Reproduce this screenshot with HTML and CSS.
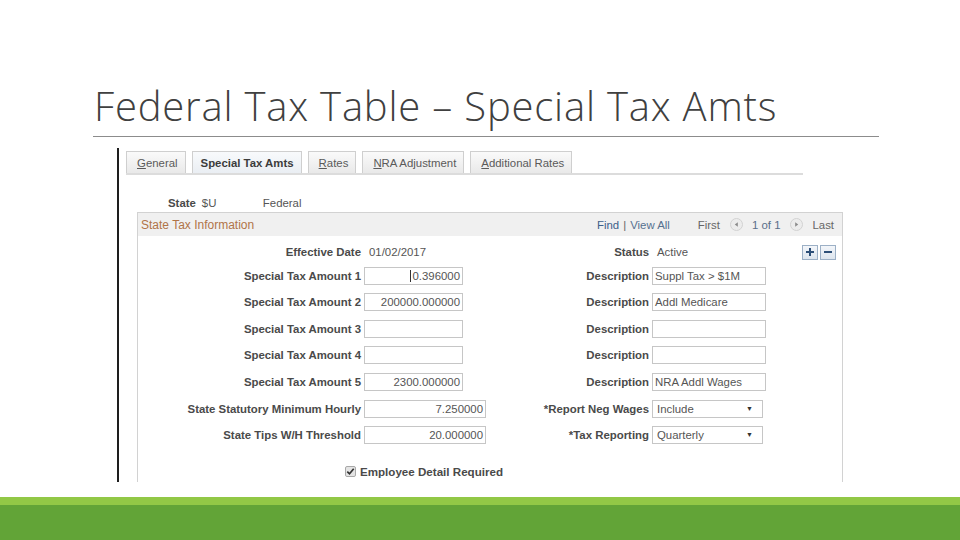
FILE: index.html
```html
<!DOCTYPE html>
<html>
<head>
<meta charset="utf-8">
<link rel="stylesheet" href="styles.css">
</head>
<body>
<div class="slide">
  <header class="title">
    <h1>Federal Tax Table – Special Tax Amts</h1>
  </header>
  <main class="shot">
    <nav class="tabs">
      <span class="tab"><u>G</u>eneral</span>
      <span class="tab active">Special Tax Amts</span>
      <span class="tab"><u>R</u>ates</span>
      <span class="tab"><u>N</u>RA Adjustment</span>
      <span class="tab"><u>A</u>dditional Rates</span>
    </nav>
    <div class="state-row">
      <span class="lbl">State</span>
      <span class="val code">$U</span>
      <span class="val">Federal</span>
    </div>
    <section class="panel">
      <div class="panel-head">
        <span class="panel-title">State Tax Information</span>
        <span class="pager">
          <span class="find">Find</span><span class="sep">|</span><span class="viewall">View All</span>
          <span class="first">First</span>
          <span class="circ"><svg width="13" height="13" viewBox="0 0 13 13"><circle cx="6.5" cy="6.5" r="6" fill="#ececec" stroke="#d2d2d2"/><path d="M7.8 4.2 L4.8 6.5 L7.8 8.8 Z" fill="#8a8a8a"/></svg></span>
          <span class="count">1 of 1</span>
          <span class="circ"><svg width="13" height="13" viewBox="0 0 13 13"><circle cx="6.5" cy="6.5" r="6" fill="#ececec" stroke="#d2d2d2"/><path d="M5.2 4.2 L8.2 6.5 L5.2 8.8 Z" fill="#8a8a8a"/></svg></span>
          <span class="last">Last</span>
        </span>
      </div>
      <div class="grid">
        <span class="lbl">Effective Date</span>
        <span class="val date">01/02/2017</span>
        <span class="lbl">Status</span>
        <span class="status-cell"><span class="val active-val">Active</span>
          <span class="btns">
            <span class="sqbtn"><svg width="10" height="10" viewBox="0 0 10 10"><path d="M5 1 V9 M1 5 H9" stroke="#2d4f78" stroke-width="2"/></svg></span>
            <span class="sqbtn"><svg width="10" height="10" viewBox="0 0 10 10"><path d="M1 5 H9" stroke="#2d4f78" stroke-width="2"/></svg></span>
          </span>
        </span>

        <span class="lbl">Special Tax Amount 1</span>
        <span class="field num short"><span class="caret"></span>0.396000</span>
        <span class="lbl">Description</span>
        <span class="field desc">Suppl Tax &gt; $1M</span>

        <span class="lbl">Special Tax Amount 2</span>
        <span class="field num short">200000.000000</span>
        <span class="lbl">Description</span>
        <span class="field desc">Addl Medicare</span>

        <span class="lbl">Special Tax Amount 3</span>
        <span class="field num short"></span>
        <span class="lbl">Description</span>
        <span class="field desc"></span>

        <span class="lbl">Special Tax Amount 4</span>
        <span class="field num short"></span>
        <span class="lbl">Description</span>
        <span class="field desc"></span>

        <span class="lbl">Special Tax Amount 5</span>
        <span class="field num short">2300.000000</span>
        <span class="lbl">Description</span>
        <span class="field desc">NRA Addl Wages</span>

        <span class="lbl">State Statutory Minimum Hourly</span>
        <span class="field num long">7.250000</span>
        <span class="lbl">*Report Neg Wages</span>
        <span class="field select">Include<span class="arrow">▼</span></span>

        <span class="lbl">State Tips W/H Threshold</span>
        <span class="field num long">20.000000</span>
        <span class="lbl">*Tax Reporting</span>
        <span class="field select">Quarterly<span class="arrow">▼</span></span>
      </div>
      <div class="check-row">
        <svg class="chk" width="11" height="11" viewBox="0 0 11 11"><rect x="0.5" y="0.5" width="10" height="10" rx="1.5" fill="#e4e4e4" stroke="#a8a8a8"/><path d="M2.3 5.6 L4.5 7.8 L8.7 2.8" fill="none" stroke="#333" stroke-width="1.7"/></svg>
        <span class="lbl">Employee Detail Required</span>
      </div>
    </section>
  </main>
  <footer class="band">
    <div class="band-light"></div>
    <div class="band-dark"></div>
  </footer>
</div>
</body>
</html>
```
FILE: styles.css
```css
html, body {
  margin: 0;
  padding: 0;
  background: #fff;
}

.slide {
  width: 960px;
  height: 540px;
  display: flex;
  flex-direction: column;
  background: #fff;
  overflow: hidden;
}

.title {
  margin: 0 81px 0 93px;
  padding: 0 0 0 1px;
  border-bottom: 1px solid #8c8c8c;
}

.title h1 {
  margin: 0;
  padding: 82px 0 6px 0;
  font-family: "Open Sans", "Liberation Sans", sans-serif;
  font-weight: 300;
  font-size: 40px;
  line-height: 48px;
  letter-spacing: 0.8px;
  color: #404040;
  white-space: nowrap;
}

.shot {
  margin: 11px 0 0 117px;
  height: 334px;
  border-left: 2px solid #1e1e1e;
  overflow: hidden;
  font-family: "Liberation Sans", Arial, sans-serif;
  font-size: 11.4px;
  color: #555;
}

.tabs {
  display: flex;
  align-items: flex-end;
  gap: 6px;
  width: 677px;
  margin: 4px 0 0 7px;
  height: 21px;
  border-bottom: 2px solid #dcdcdc;
}

.tab {
  height: 21px;
  line-height: 22px;
  padding: 0 7px 0 10px;
  border: 1px solid #cfcfcf;
  border-bottom: none;
  background: linear-gradient(#fafafa, #e9e9e9);
  color: #5a5a5a;
  white-space: nowrap;
}

.tab u {
  text-decoration: underline;
}

.tab.active {
  font-weight: bold;
  color: #3c3c3c;
  background: linear-gradient(#f8fafc, #eaeef3);
  padding: 0 7px 0 8px;
}

.state-row {
  display: flex;
  align-items: center;
  height: 14px;
  margin: 21px 0 0 49px;
}

.lbl {
  font-weight: bold;
  color: #4a4a4a;
  white-space: nowrap;
}

.val {
  color: #555;
  white-space: nowrap;
}

.state-row .code {
  margin-left: 6px;
  width: 61px;
}

.panel {
  margin: 2px 0 0 18px;
  width: 704px;
  border: 1px solid #d2d2d2;
  height: 400px;
}

.panel-head {
  display: flex;
  align-items: center;
  justify-content: space-between;
  height: 23px;
  background: #f0f0f0;
  padding: 0 8px 0 3px;
}

.panel-title {
  color: #b07448;
  font-size: 12px;
}

.pager {
  display: flex;
  align-items: center;
  color: #666;
}

.find {
  color: #3d5f8a;
}

.sep {
  color: #666;
  margin: 0 4px;
}

.viewall {
  color: #56708f;
}

.first {
  margin-left: 28px;
}

.circ {
  display: flex;
  margin: 0 9px 0 10px;
}

.count {
  color: #5a6f8a;
}

.grid {
  display: grid;
  grid-template-columns: 223px 125px 157px 1fr;
  grid-template-rows: 14px repeat(7, 20px);
  column-gap: 3px;
  row-gap: 6.6px;
  align-items: center;
  padding-top: 9px;
}

.grid .lbl {
  text-align: right;
}

.date {
  padding-left: 5px;
}

.status-cell {
  display: flex;
  align-items: center;
  justify-content: space-between;
  padding-right: 6px;
}

.active-val {
  padding-left: 5px;
}

.btns {
  display: flex;
  gap: 2px;
}

.sqbtn {
  width: 14px;
  height: 13px;
  border: 1px solid #9cb0c6;
  background: linear-gradient(#f3f6fa, #dde5ee);
  display: flex;
  align-items: center;
  justify-content: center;
}

.field {
  box-sizing: border-box;
  height: 18px;
  line-height: 16px;
  border: 1px solid #c6c6c6;
  background: #fff;
  color: #555;
  white-space: nowrap;
  display: flex;
  align-items: center;
}

.num {
  justify-content: flex-end;
  padding-right: 2px;
}

.short {
  width: 99px;
}

.long {
  width: 122px;
}

.desc {
  width: 114px;
  padding-left: 2px;
}

.select {
  width: 111px;
  padding-left: 4px;
  justify-content: space-between;
  padding-right: 9px;
}

.arrow {
  font-size: 7px;
  color: #333;
}

.caret {
  width: 1px;
  height: 12px;
  background: #333;
  margin-right: 1px;
}

.check-row {
  display: flex;
  align-items: center;
  gap: 4px;
  height: 14px;
  margin: 19px 0 0 207px;
}

.check-row .lbl {
  font-size: 11.6px;
}

.band {
  margin-top: auto;
  display: flex;
  flex-direction: column;
}

.band-light {
  height: 8px;
  background: #92c846;
}

.band-dark {
  height: 35px;
  background: #62a437;
}
```
